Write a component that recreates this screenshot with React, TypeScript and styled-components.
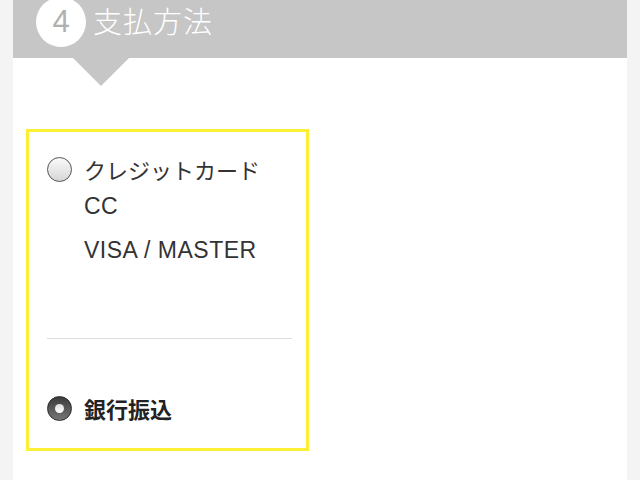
import React from 'react';
import styled, { createGlobalStyle } from 'styled-components';

const GlobalStyle = createGlobalStyle`
  html, body {
    margin: 0;
    padding: 0;
    background: #f4f4f4;
    font-family: "Liberation Sans", "Noto Sans CJK JP", sans-serif;
    overflow: hidden;
  }
`;

const Card = styled.div`
  margin: 0 13px 0 13px;
  background: #fff;
  min-height: 480px;
  overflow: hidden;
`;

const Header = styled.div`
  position: relative;
  margin-top: -22px;
  height: 80px;
  padding: 8px 0 0 23px;
  box-sizing: border-box;
  background: #c6c6c6;
  display: flex;
  align-items: center;
  gap: 7px;

  &::after {
    content: '';
    position: absolute;
    left: 60px;
    top: 80px;
    border-left: 28px solid transparent;
    border-right: 28px solid transparent;
    border-top: 28px solid #c6c6c6;
  }
`;

const StepBadge = styled.div`
  width: 50px;
  height: 50px;
  border-radius: 50%;
  background: #fff;
  color: #b0b0b0;
  font-size: 31px;
  font-weight: 300;
  display: flex;
  align-items: center;
  justify-content: center;
`;

const Title = styled.h2`
  margin: 0 0 4px 0;
  color: #fff;
  font-size: 29px;
  font-weight: 300;
  font-family: "Noto Sans CJK JP", sans-serif;
  letter-spacing: 1px;
`;

const Body = styled.div`
  padding: 71px 0 40px 13px;
`;

const Choices = styled.div`
  width: 283px;
  height: 322px;
  box-sizing: border-box;
  border: 3px solid #fbf034;
  padding: 22px 14px 0 18px;
`;

const Option = styled.label`
  display: flex;
  align-items: center;
  gap: 12px;
  height: 30px;
  cursor: pointer;
`;

const Radio = styled.span<{ $checked?: boolean }>`
  width: 25px;
  height: 25px;
  border-radius: 50%;
  box-sizing: border-box;
  flex: none;
  display: flex;
  align-items: center;
  justify-content: center;
  border: 1.5px solid ${(p) => (p.$checked ? '#2a2a2a' : '#555')};
  background: ${(p) =>
    p.$checked
      ? 'linear-gradient(180deg, #3a3a3a 0%, #777 100%)'
      : 'linear-gradient(180deg, #fafafa 0%, #d6d6d6 100%)'};

  &::after {
    content: '';
    display: ${(p) => (p.$checked ? 'block' : 'none')};
    width: 9px;
    height: 9px;
    border-radius: 50%;
    background: linear-gradient(180deg, #ddd 0%, #fff 100%);
  }
`;

const OptionLabel = styled.span<{ $bold?: boolean }>`
  font-family: "Noto Sans CJK JP", sans-serif;
  font-size: 22px;
  font-weight: ${(p) => (p.$bold ? 700 : 400)};
  color: ${(p) => (p.$bold ? '#222' : '#333')};
`;

const SubLine = styled.div<{ $gap: number }>`
  margin: ${(p) => p.$gap}px 0 0 37px;
  line-height: 30px;
  font-size: 23px;
  letter-spacing: 0.5px;
  color: #333;
`;

const Divider = styled.hr`
  border: 0;
  border-top: 1px solid #dedede;
  margin: 73px 0 54px 0;
`;

export default function App() {
  return (
    <>
      <GlobalStyle />
      <Card>
        <Header>
          <StepBadge>4</StepBadge>
          <Title>支払方法</Title>
        </Header>
        <Body>
          <Choices>
            <Option>
              <Radio />
              <OptionLabel>クレジットカード</OptionLabel>
            </Option>
            <SubLine $gap={7}>CC</SubLine>
            <SubLine $gap={14}>VISA / MASTER</SubLine>
            <Divider />
            <Option>
              <Radio $checked />
              <OptionLabel $bold>銀行振込</OptionLabel>
            </Option>
          </Choices>
        </Body>
      </Card>
    </>
  );
}
